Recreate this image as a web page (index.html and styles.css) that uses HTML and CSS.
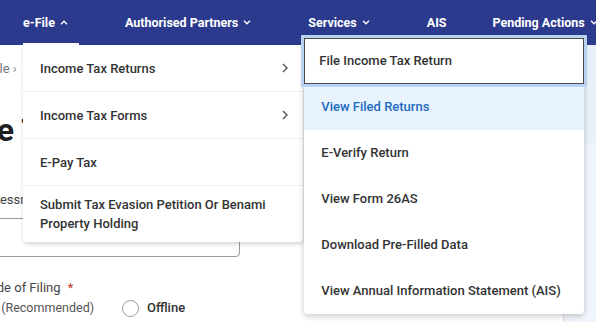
FILE: index.html
```html
<!DOCTYPE html>
<html lang="en">
<head>
<meta charset="utf-8">
<title>e-File menu</title>
<link rel="stylesheet" href="styles.css">
</head>
<body>
<header class="nav">
  <div class="nav-item active">
    <span>e-File</span>
    <svg class="caret" viewBox="0 0 8 5" width="8" height="5"><path d="M1 4.2 L4 1.2 L7 4.2" fill="none" stroke="#fff" stroke-width="1.3"/></svg>
    <div class="menu menu-efile">
      <div class="m-row"><span>Income Tax Returns</span><svg class="chev" viewBox="0 0 6 10" width="6" height="10"><path d="M1 1 L5 5 L1 9" fill="none" stroke="#555" stroke-width="1.4"/></svg></div>
      <div class="m-row"><span>Income Tax Forms</span><svg class="chev" viewBox="0 0 6 10" width="6" height="10"><path d="M1 1 L5 5 L1 9" fill="none" stroke="#555" stroke-width="1.4"/></svg></div>
      <div class="m-row"><span>E-Pay Tax</span></div>
      <div class="m-row"><span>Submit Tax Evasion Petition Or Benami Property Holding</span></div>
    </div>
  </div>
  <div class="nav-item">
    <span>Authorised Partners</span>
    <svg class="caret" viewBox="0 0 8 5" width="8" height="5"><path d="M1 0.8 L4 3.8 L7 0.8" fill="none" stroke="#fff" stroke-width="1.3"/></svg>
  </div>
  <div class="nav-item">
    <span>Services</span>
    <svg class="caret" viewBox="0 0 8 5" width="8" height="5"><path d="M1 0.8 L4 3.8 L7 0.8" fill="none" stroke="#fff" stroke-width="1.3"/></svg>
    <div class="menu menu-sub">
      <div class="s-row focus">File Income Tax Return</div>
      <div class="s-row hover">View Filed Returns</div>
      <div class="s-row">E-Verify Return</div>
      <div class="s-row">View Form 26AS</div>
      <div class="s-row">Download Pre-Filled Data</div>
      <div class="s-row">View Annual Information Statement (AIS)</div>
    </div>
  </div>
  <div class="nav-item ais"><span>AIS</span></div>
  <div class="nav-item">
    <span>Pending Actions</span>
    <svg class="caret" viewBox="0 0 8 5" width="8" height="5"><path d="M1 0.8 L4 3.8 L7 0.8" fill="none" stroke="#fff" stroke-width="1.3"/></svg>
  </div>
</header>
<div class="page">
  <main class="main">
    <div class="content">
      <div class="crumbs">Dashboard<span class="sep">›</span>e-File<span class="sep">›</span>Income Tax Returns</div>
      <h1 class="title">Income Tax Return</h1>
      <div class="form">
        <div class="label">Assessment Year <span class="req">*</span></div>
        <div class="input"></div>
        <div class="label mode">Mode of Filing <span class="req">*</span></div>
        <div class="radios">
          <label class="radio"><span class="circle"></span><span>Online (Recommended)</span></label>
          <label class="radio off"><span class="circle"></span><span class="opt">Offline</span></label>
        </div>
      </div>
    </div>
  </main>
  <aside class="aside">
    <div class="aside-top"></div>
  </aside>
</div>
</body>
</html>
```
FILE: styles.css
```css
* { box-sizing: border-box; }
html, body { margin: 0; padding: 0; }
body {
  width: 596px;
  height: 322px;
  overflow: hidden;
  background: #fff;
  font-family: Roboto, "Liberation Sans", Arial, sans-serif;
  color: #333;
}
.nav {
  height: 45px;
  background: #2c3a8e;
  display: flex;
  align-items: stretch;
  padding-left: 23px;
  gap: 57px;
  position: relative;
  z-index: 5;
}
.nav-item {
  position: relative;
  display: flex;
  align-items: center;
  color: #fff;
  font-size: 12.5px;
  font-weight: 700;
  white-space: nowrap;
  padding-bottom: 1px;
}
.nav-item .caret { margin-left: 5px; }
.nav-item.ais { margin-right: -11px; }
.nav-item.active::after {
  content: "";
  position: absolute;
  left: 0;
  bottom: 0;
  width: 56px;
  height: 2px;
  background: #fff;
}
.menu {
  position: absolute;
  width: 280px;
  background: #fff;
  color: #333;
  font-weight: 500;
  font-size: 13px;
  white-space: normal;
  border-radius: 0 0 4px 4px;
}
.menu-efile {
  left: 0;
  top: 45px;
  box-shadow: 1px 2px 5px rgba(0,0,0,0.18);
  z-index: 1;
}
.m-row {
  min-height: 47px;
  display: flex;
  align-items: center;
  justify-content: space-between;
  padding: 9px 15px 9px 17px;
  line-height: 19px;
  border-bottom: 1px solid #eeeeee;
}
.m-row:last-child { border-bottom: none; min-height: 56px; padding-right: 24px; }
.m-row .chev { flex: none; margin-left: 10px; }
.menu-sub {
  left: -4px;
  top: 38px;
  box-shadow: 0 2px 6px rgba(0,0,0,0.22);
  z-index: 2;
}
.s-row {
  height: 46px;
  display: flex;
  align-items: center;
  padding: 0 17px 1px;
  color: #333;
}
.s-row.focus {
  padding-left: 15px;
  box-shadow: inset 0 0 0 1px #4a4a4a, 0 0 0 3px #b9d2f1;
  position: relative;
  z-index: 1;
}
.s-row.hover {
  background: #e9f3fd;
  color: #1d6bc2;
}
.page {
  display: flex;
  height: 277px;
}
.main {
  flex: 1;
  overflow: hidden;
  position: relative;
}
.content {
  margin-left: -93px;
  width: 700px;
}
.crumbs {
  margin-top: 15px;
  margin-left: -7px;
  font-size: 13px;
  line-height: 18px;
  color: #777;
  white-space: nowrap;
}
.crumbs .sep { color: #888; margin: 0 9px 0 3px; }
.title {
  margin: 32px 0 0;
  font-size: 32px;
  line-height: 40px;
  font-weight: 700;
  color: #1f1f1f;
  white-space: nowrap;
}
.form {
  margin-left: 71px;
  margin-top: 41px;
}
.label {
  font-size: 13px;
  line-height: 18px;
  color: #444;
  white-space: nowrap;
}
.label.mode { margin-top: 22px; font-size: 13px; }
.req { color: #c0392b; margin-left: 4px; }
.input {
  margin-top: 9px;
  width: 262px;
  height: 39px;
  border: 1px solid #9a9a9a;
  border-radius: 4px;
}
.radios {
  display: flex;
  align-items: center;
  gap: 28px;
  margin-left: -40px;
  margin-top: 2px;
  font-size: 12.5px;
  color: #555;
  white-space: nowrap;
}
.radio {
  display: flex;
  align-items: center;
  gap: 8px;
  line-height: 18px;
}
.circle {
  width: 17px;
  height: 17px;
  border: 1px solid #9a9a9a;
  border-radius: 50%;
  display: inline-block;
}
.radio .opt { color: #333; font-weight: 500; font-size: 13px; }
.aside {
  width: 33px;
  flex: none;
  background: #f1f6fc;
  border-left: 1px solid #d9dde3;
}
.aside-top {
  height: 98px;
  background: #e9f1fa;
}
```
